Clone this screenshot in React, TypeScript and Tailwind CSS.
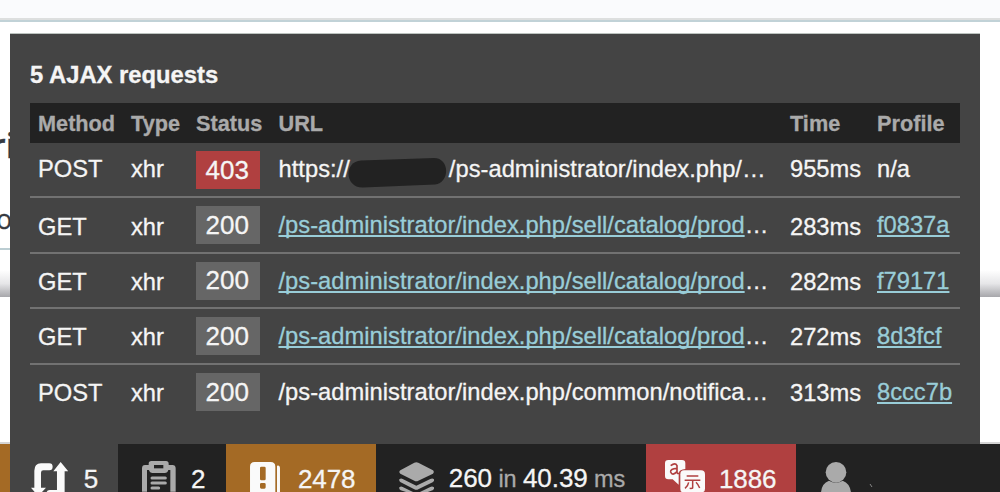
import type { ReactNode } from "react";

type Request = {
  method: string;
  status: number;
  url: ReactNode;
  time: string;
  profile: string;
  height: string;
  linked: boolean;
  offset: string;
};

const link =
  "text-[#99cdd8] underline decoration-[1.6px] underline-offset-[2px] [text-decoration-skip-ink:none]";

const columns =
  "grid grid-cols-[93px_65px_82.5px_511.5px_87px_1fr] items-center pl-2";

const rows: Request[] = [
  {
    method: "POST",
    status: 403,
    url: (
      <span className="flex items-center">
        https://
        <svg className="-ml-[3px] mt-[6px] shrink-0" width="102" height="30" viewBox="0 0 102 30">
          <path
            d="M14 2.500 L87 0 C103 0 103 25 88 26.500 L16 29.500 C-2 30 -4 4 14 2.500Z"
            fill="#222"
          />
        </svg>
        <span>/ps-administrator/index.php/…</span>
      </span>
    ),
    time: "955ms",
    profile: "n/a",
    height: "h-[55px]",
    linked: false,
    offset: "mt-px",
  },
  { method: "GET", status: 200, url: "/ps-administrator/index.php/sell/catalog/prod", time: "283ms", profile: "f0837a", height: "h-[56px]", linked: true, offset: "mt-[5px]" },
  { method: "GET", status: 200, url: "/ps-administrator/index.php/sell/catalog/prod", time: "282ms", profile: "f79171", height: "h-[55px]", linked: true, offset: "mt-[5px]" },
  { method: "GET", status: 200, url: "/ps-administrator/index.php/sell/catalog/prod", time: "272ms", profile: "8d3fcf", height: "h-[56px]", linked: true, offset: "mt-[4px]" },
  { method: "POST", status: 200, url: "/ps-administrator/index.php/common/notifica…", time: "313ms", profile: "8ccc7b", height: "h-[54px]", linked: false, offset: "mt-[4px]" },
];

function RequestRow({ row, last }: { row: Request; last: boolean }) {
  return (
    <div className={`${columns} ${row.height} ${last ? "" : "border-b-2 border-[#727272]"}`}>
      <span className={row.offset}>{row.method}</span>
      <span className={row.offset}>xhr</span>
      <span
        className={`flex h-[38px] w-[63.5px] items-center justify-center pr-px text-[26px] ${
          row.status === 403 ? "bg-[#b04040] pt-px" : "bg-[#666]"
        }`}
      >
        {row.status}
      </span>
      <span className={`tracking-[0.03px] ${row.status === 403 ? "mt-px" : "mt-[2px]"}`}>
        {row.linked ? (
          <>
            <span className={link}>{row.url}</span>…
          </>
        ) : (
          row.url
        )}
      </span>
      <span className={row.offset}>{row.time}</span>
      {row.profile === "n/a" ? (
        <span className={row.offset}>n/a</span>
      ) : (
        <span className="mt-[2px]">
          <span className={link}>{row.profile}</span>
        </span>
      )}
    </div>
  );
}

function AjaxIcon() {
  return (
    <svg width="37.3" height="30" viewBox="93 96 112 90" className="shrink-0">
      <path
        d="M148 100 H123 Q103 101 103 122 V173 H93 L104 186 H126 L138 173 H123 V128 Q123 121 130 121 H148 Q158 121 158 110.500 Q158 100 148 100Z"
        fill="#fafafa"
      />
      <path d="M182 96 L205 124 H194 V186 H140 Q142 180 149 180 H171 V124 H160Z" fill="#fafafa" />
    </svg>
  );
}

function FormIcon() {
  return (
    <svg width="34" height="30.7" viewBox="425 94 102 92" className="shrink-0">
      <path
        d="M434 106 H445 V102 Q445 94 453 94 H497 Q505 94 505 102 V106 H516 Q526 106 526 116 V186 H510 V121 H504 Q502 130 493 130 H457 Q448 130 446 121 H440 V186 H425 V116 Q425 106 434 106Z"
        fill="#aaa"
      />
      <path d="M461 106 H489 V116 H461Z" fill="#222" />
      <path d="M455 145 H495 M455 160 H495 M455 175 H475" stroke="#aaa" strokeWidth="9" strokeLinecap="round" />
    </svg>
  );
}

function LogIcon() {
  return (
    <svg width="30" height="30.3" viewBox="90 95 90 91" className="shrink-0">
      <path
        fillRule="evenodd"
        d="M104 95 H152 Q166 95 166 109 V186 H90 V109 Q90 95 104 95Z M124 109 Q120 109 120 113 V146 Q120 150 124 150 H133 Q137 150 137 146 V113 Q137 109 133 109Z M124 158 Q120 158 120 162 V171 Q120 175 124 175 H133 Q137 175 137 171 V162 Q137 158 133 158Z"
        fill="#fafafa"
      />
      <path d="M171 106 Q180 103 180 115 V186 H171Z" fill="#fafafa" />
    </svg>
  );
}

function LayersIcon() {
  return (
    <svg width="35.3" height="30.3" viewBox="536 95 106 91" className="shrink-0" fill="#aaa">
      <path d="M582 97 Q588 94 594 97 L638 120 Q643 125 638 130 L594 151 Q588 154 582 151 L540 130 Q534 125 540 120Z" />
      <path d="M537 147 Q542 143 547 146 L588 166 L630 146 Q637 143 641 147 Q643 152 637 156 L594 177 Q588 180 582 177 L541 156 Q535 152 537 147Z" />
      <path d="M537 171 Q542 167 547 170 L580 186 H560 L541 180 Q535 176 537 171Z M641 171 Q636 167 630 170 L597 186 H620 L637 180 Q643 176 641 171Z" />
    </svg>
  );
}

function TranslationIcon() {
  return (
    <svg width="40" height="32" viewBox="195 90 120 96" className="shrink-0">
      <path
        d="M205 90 H246 Q256 90 256 100 V117 Q238 118 236 130 V164 L218 148 H205 Q195 148 195 138 V100 Q195 90 205 90Z"
        fill="#fafafa"
      />
      <path
        d="M212 107 Q226 96 231 107 V127 Q232 132 237 130 M231 115 Q210 116 212 126 Q217 139 231 125"
        fill="none"
        stroke="#b04040"
        strokeWidth="5"
      />
      <path d="M252 121 H303 Q315 121 315 133 V176 Q315 184 310 186 H245 Q241 184 241 176 V133 Q241 121 252 121Z" fill="#fafafa" />
      <path d="M260 138 H295 M254 151 H301 M278 151 V173 Q278 176 269 175 M266 157 Q264 168 255 175 M288 157 Q295 164 299 174" fill="none" stroke="#b04040" strokeWidth="4.500" />
    </svg>
  );
}

function UserIcon() {
  return (
    <svg width="30" height="30.300" viewBox="662 95 90 91" className="shrink-0" fill="#aaa">
      <ellipse cx="707" cy="126" rx="31" ry="31" />
      <path d="M662 186 Q664 159 686 151 Q707 163 727 151 Q749 159 752 186Z" />
    </svg>
  );
}

function Toolbar() {
  return (
    <div className="flex h-12 shrink-0 overflow-hidden bg-[#222] text-[26px] leading-[34px] text-[#f5f5f5]">
      <div className="w-[10px] bg-[#a46a25]" />
      <div className="flex w-[108px] items-end bg-[#444] pl-[21px]">
        <AjaxIcon />
        <span className="-mb-[4px] ml-[15.500px]">5</span>
      </div>
      <div className="flex w-[108px] items-end pl-[23.500px]">
        <FormIcon />
        <span className="-mb-[4px] ml-[15.500px]">2</span>
      </div>
      <div className="flex w-[150px] items-end bg-[#a46a25] pl-[24px]">
        <LogIcon />
        <span className="-mb-[4px] ml-[18px] tracking-[-0.1px]">2478</span>
      </div>
      <div className="flex w-[270px] items-end pl-[22.500px]">
        <LayersIcon />
        <span className="-mb-[4px] ml-[15px] text-[23.500px] tracking-[-0.08px] whitespace-nowrap text-[#aaa]">
          <span className="text-[26px] text-[#f5f5f5]">260</span> in{" "}
          <span className="text-[26px] text-[#f5f5f5]">40.39</span> ms
        </span>
      </div>
      <div className="flex w-[150px] items-end bg-[#b04040] pl-[19px]">
        <TranslationIcon />
        <span className="-mb-[4px] ml-[14px] tracking-[-0.1px]">1886</span>
      </div>
      <div className="flex items-end pl-[25px]">
        <UserIcon />
        <svg width="5" height="5" viewBox="0 0 5 5" className="mb-1 ml-[18px]">
          <path d="M1 1 L3 4" stroke="#888" strokeWidth="1" />
        </svg>
      </div>
    </div>
  );
}

export default function App() {
  return (
    <div className="relative flex h-[492px] w-[1000px] flex-col overflow-hidden bg-white font-['Liberation_Sans',Arial,sans-serif] [-webkit-text-stroke:0.3px]">
      <div className="h-[22px] shrink-0 border-b-2 border-[#c1d2d7] bg-[#fafbfd]">
        <div className="mt-[18px] h-[2px] bg-[#dddfdf]" />
      </div>
      <div className="h-[248px] w-full overflow-hidden text-[#363a41]">
        <div className="-ml-[9px] h-[180px] pt-[103px] font-['Open_Sans',sans-serif] text-[34px] leading-[40px] font-semibold">ri</div>
        <div className="-ml-[4px] h-[46px] pt-[2px] text-[27px] leading-[30px] font-['Open_Sans',sans-serif]">o</div>
        <div className="h-[2px] w-[10px] bg-[#bbcdd2]" />
      </div>
      <div className="h-[27px] shrink-0 bg-linear-to-b from-white via-[#e6e6e8] to-[#a7a7ab]" />
      <div className="grow border-b-2 border-[#d4d4d4]" />
      <Toolbar />

      <div className="absolute top-[33px] left-[10px] h-[411px] w-[970px] border-t border-[#bcc3bf] bg-[#444] px-5 text-[23.700px] whitespace-nowrap text-[#f5f5f5]">
        <h4 className="h-[69px] pt-[25px] text-[23.800px] leading-[32px] font-bold">5 AJAX requests</h4>
        <div className={`${columns} h-10 bg-[#222] pt-[2px] text-[21.700px] font-bold text-[#aaa]`}>
          <span>Method</span>
          <span>Type</span>
          <span>Status</span>
          <span>URL</span>
          <span>Time</span>
          <span>Profile</span>
        </div>
        {rows.map((row, i) => (
          <RequestRow key={row.profile} row={row} last={i === rows.length - 1} />
        ))}
      </div>
    </div>
  );
}
